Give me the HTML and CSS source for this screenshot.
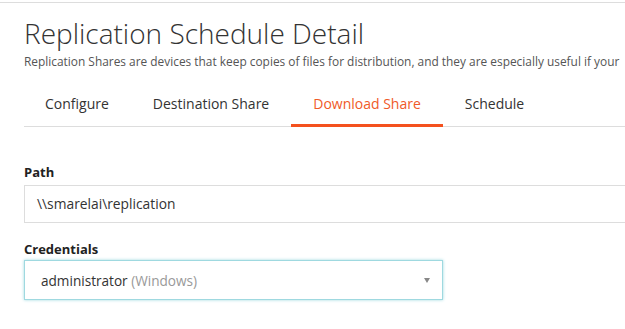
FILE: index.html
```html
<!DOCTYPE html>
<html lang="en">
<head>
    <meta charset="UTF-8">
    <title>Replication Schedule Detail</title>
    <link rel="stylesheet" href="styles.css">
</head>
<body>
    <div class="page">
        <div class="page-header">
            <h1>Replication Schedule Detail</h1>
            <p class="lead">Replication Shares are devices that keep copies of files for distribution, and they are especially useful if your</p>
        </div>

        <ul class="tabs">
            <li class="tab">Configure</li>
            <li class="tab">Destination Share</li>
            <li class="tab active">Download Share</li>
            <li class="tab">Schedule</li>
        </ul>

        <form class="form">
            <div class="field">
                <label class="field-label">Path</label>
                <div class="input">\\smarelai\replication</div>
            </div>
            <div class="field">
                <label class="field-label">Credentials</label>
                <div class="select focused">
                    <span>administrator <span class="muted">(Windows)</span></span>
                    <span class="caret"></span>
                </div>
            </div>
        </form>
    </div>
</body>
</html>
```

FILE: styles.css
```css
body {
    margin: 0;
    padding-top: 2px;
    font-family: 'Open Sans', sans-serif;
    color: #333;
    background: #fff;
    overflow: hidden;
}

.page {
    border-top: 1px solid #ddd;
    padding: 0 0 0 24px;
    width: 900px;
}

.page-header h1 {
    font-size: 28px;
    font-weight: 300;
    margin: 10px 0 0;
    line-height: 40px;
    color: #333;
}

.lead {
    font-size: 11.9px;
    color: #555;
    margin: 0;
    line-height: 16px;
    white-space: nowrap;
}

/* --- Tabs --- */
.tabs {
    list-style: none;
    margin: 16px 0 0;
    padding: 0;
    display: flex;
    border-bottom: 1px solid #ddd;
}

.tab {
    font-size: 14px;
    padding: 9px 22px 11px;
    border-bottom: 3px solid transparent;
    margin-bottom: -1px;
    color: #333;
}

.tab:first-child {
    padding-left: 21px;
}

.tab.active {
    color: #f05a28;
    border-bottom-color: #f4511e;
}

/* --- Form --- */
.form {
    margin-top: 36px;
}

.field {
    margin-bottom: 17px;
}

.field-label {
    display: block;
    font-size: 13px;
    font-weight: 700;
    margin-bottom: 4px;
    color: #222;
}

.input {
    border: 1px solid #ddd;
    height: 36px;
    line-height: 36px;
    padding: 0 12px;
    font-size: 13.8px;
}

.select {
    width: 389px;
    height: 38px;
    margin-top: -2px;
    border: 1px solid #aaa;
    padding: 0 12px 0 16px;
    display: flex;
    align-items: center;
    justify-content: space-between;
    font-size: 13.6px;
}

.select.focused {
    border-color: #9fd9e0;
    box-shadow: 0 0 3px #9fd9e0;
}

.muted {
    color: #999;
}

.caret {
    width: 0;
    height: 0;
    border-left: 3px solid transparent;
    border-right: 3px solid transparent;
    border-top: 5px solid #888;
}
```
